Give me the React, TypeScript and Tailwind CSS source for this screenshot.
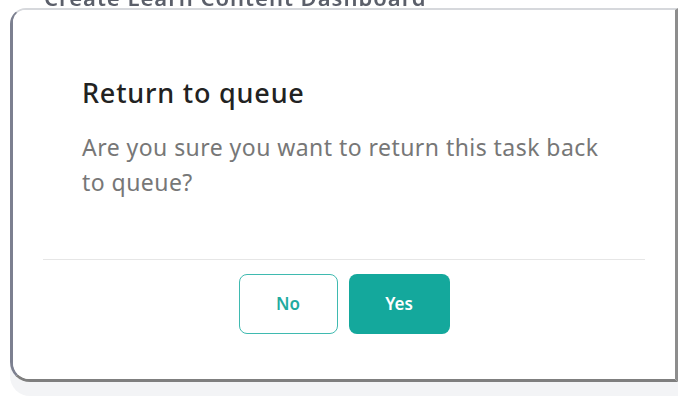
import React from "react";

export default function App() {
  return (
    <div
      className="relative w-[685px] h-[404px] overflow-hidden bg-white"
      style={{ fontFamily: '"Noto Sans", "Open Sans", sans-serif' }}
    >
      <div className="absolute left-[44px] top-[-19px] text-[22px] font-semibold text-[#5b5f6a] blur-[0.6px] whitespace-nowrap tracking-[1px]">
        Create Learn Content Dashboard
      </div>
      <div className="relative ml-[10px] mt-[8px] w-[668px] h-[374px] rounded-tl-[16px] rounded-bl-[20px] border-l-[3px] border-t-[2px] border-r-[3px] border-b-[3px] border-l-[#7c8090] border-t-[#d6d8dc] border-r-[#8d8d8d] border-b-[#7f7f7f] shadow-[0_14px_0_0_#f3f4f6]">
        <div className="flex h-full flex-col rounded-tl-[12px] rounded-bl-[16px] bg-white">
          <div className="pl-[69px] pt-[66px]">
            <h2 className="text-[27px] leading-[34px] font-medium tracking-[0.8px] text-[#222222]">
              Return to queue
            </h2>
            <p className="mt-[20px] w-[530px] text-[23px] leading-[35px] tracking-[0.45px] text-[#777777]">
              Are you sure you want to return this task back to queue?
            </p>
          </div>
          <div className="mx-[30px] mt-auto mb-[14px] h-px bg-[#e6e6e6]" />
          <div className="mb-[45px] flex justify-center gap-[11px]">
            <button className="flex h-[60px] w-[99px] items-center justify-center rounded-[8px] border-[1.5px] border-[#3fbab0] bg-white text-[17px] font-semibold text-[#1fab9f]">
              No
            </button>
            <button className="flex h-[60px] w-[101px] items-center justify-center rounded-[8px] bg-[#14a89c] text-[17px] font-semibold text-white">
              Yes
            </button>
          </div>
        </div>
      </div>
    </div>
  );
}
